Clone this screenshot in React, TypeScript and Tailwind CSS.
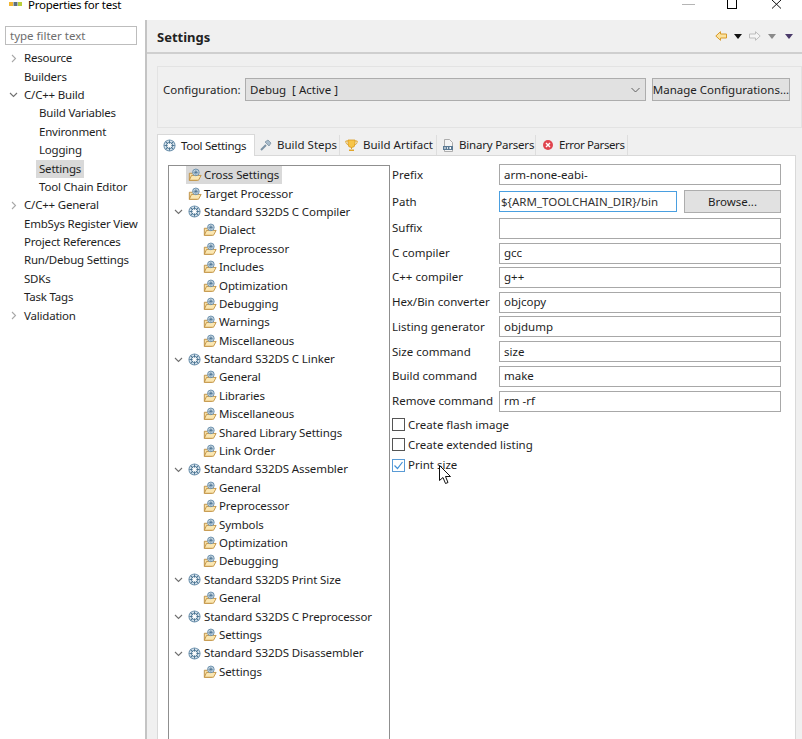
import React from "react";

const font = { fontFamily: '"Noto Sans", "Open Sans", sans-serif' };

function Gear({ className = "" }: { className?: string }) {
  return (
    <svg width="13" height="13" viewBox="0 0 14 14" className={"shrink-0 " + className}>
      <circle cx="7" cy="7" r="6" fill="#d5e2ec" stroke="#6f93ae" strokeWidth="1.100" />
      <circle cx="7" cy="7" r="3.400" fill="#fff" stroke="#4d7896" strokeWidth="1" />
      <path d="M7 1.500V5M7 9v3.500M1.500 7H5M9 7h3.500M3 3l2.500 2.500M8.500 8.500L11 11M11 3L8.500 5.500M5.500 8.500L3 11" stroke="#47708f" strokeWidth="1" />
    </svg>
  );
}

function FolderGear() {
  return (
    <svg width="14" height="14" viewBox="0 0 16 15" className="shrink-0">
      <path d="M1.500 5.500H5l1-1h4v9H1.500z" fill="#f6dfa6" stroke="#b98a3e" strokeWidth="1" />
      <path d="M1.500 13.500L4 8h11l-3 5.500z" fill="#fbe7b2" stroke="#c08f3d" strokeWidth="1" />
      <circle cx="9" cy="4.500" r="3.800" fill="#dce8f0" stroke="#5f87a6" strokeWidth="1" />
      <path d="M9 1.500v6M6 4.500h6M7 2.500l4 4M11 2.500l-4 4" stroke="#47708f" strokeWidth="0.800" />
    </svg>
  );
}

function Chevron({ open }: { open: boolean }) {
  return (
    <svg width="9" height="9" viewBox="0 0 9 9" className="shrink-0">
      {open ? (
        <path d="M1 3l3.500 3.500L8 3" fill="none" stroke="#707070" strokeWidth="1.100" />
      ) : (
        <path d="M3 1l3.500 3.500L3 8" fill="none" stroke="#a8a8a8" strokeWidth="1.100" />
      )}
    </svg>
  );
}

const nav: [string, number, boolean?, boolean?][] = [
  ["Resource", 0, false, true],
  ["Builders", 0],
  ["C/C++ Build", 0, true, true],
  ["Build Variables", 1],
  ["Environment", 1],
  ["Logging", 1],
  ["Settings", 1],
  ["Tool Chain Editor", 1],
  ["C/C++ General", 0, false, true],
  ["EmbSys Register View", 0],
  ["Project References", 0],
  ["Run/Debug Settings", 0],
  ["SDKs", 0],
  ["Task Tags", 0],
  ["Validation", 0, false, true],
];

const tree: [string, number][] = [
  ["Cross Settings", 0],
  ["Target Processor", 0],
  ["Standard S32DS C Compiler", 2],
  ["Dialect", 1],
  ["Preprocessor", 1],
  ["Includes", 1],
  ["Optimization", 1],
  ["Debugging", 1],
  ["Warnings", 1],
  ["Miscellaneous", 1],
  ["Standard S32DS C Linker", 2],
  ["General", 1],
  ["Libraries", 1],
  ["Miscellaneous", 1],
  ["Shared Library Settings", 1],
  ["Link Order", 1],
  ["Standard S32DS Assembler", 2],
  ["General", 1],
  ["Preprocessor", 1],
  ["Symbols", 1],
  ["Optimization", 1],
  ["Debugging", 1],
  ["Standard S32DS Print Size", 2],
  ["General", 1],
  ["Standard S32DS C Preprocessor", 2],
  ["Settings", 1],
  ["Standard S32DS Disassembler", 2],
  ["Settings", 1],
];

const fields: [string, string, string][] = [
  ["Prefix", "arm-none-eabi-", "h-[27px]"],
  ["Path", "${ARM_TOOLCHAIN_DIR}/bin", "h-[27px]"],
  ["Suffix", "", "h-[26px]"],
  ["C compiler", "gcc", "h-[24px]"],
  ["C++ compiler", "g++", "h-[24.500px]"],
  ["Hex/Bin converter", "objcopy", "h-[25px]"],
  ["Listing generator", "objdump", "h-[24.750px]"],
  ["Size command", "size", "h-[24.750px]"],
  ["Build command", "make", "h-[24.750px]"],
  ["Remove command", "rm -rf", "h-[24.750px]"],
];

function Tab({ label, icon, w, active, track = "" }: { label: string; icon: React.ReactNode; w: string; active?: boolean; track?: string }) {
  return (
    <div
      className={
        (active
          ? "flex items-center gap-[5px] h-[22px] pl-[5px] bg-white border border-b-0 border-[#d9d9d9] relative top-px "
          : "flex items-center gap-[5px] h-[20px] pl-[5px] bg-[#f0f0f0] border-r border-[#dedede] ") + w
      }
    >
      {icon}
      <span className={"whitespace-nowrap " + track}>{label}</span>
    </div>
  );
}

function Check({ checked, label }: { checked?: boolean; label: string }) {
  return (
    <div className="flex items-center h-[20.300px] gap-[2px]">
      <div className={"w-[13px] h-[13px] border bg-white flex items-center justify-center " + (checked ? "border-[#5a9bd5]" : "border-[#555]")}>
        {checked && (
          <svg width="11" height="11" viewBox="0 0 11 11">
            <path d="M1.500 5.500l3 3 5-6.500" fill="none" stroke="#3f8fd6" strokeWidth="1.200" />
          </svg>
        )}
      </div>
      <span className="ml-[1px]">{label}</span>
    </div>
  );
}

export default function App() {
  return (
    <div style={font} className="w-[802px] h-[739px] overflow-hidden bg-white text-[11.500px] leading-[18px] text-[#1e1e1e] flex flex-col relative">
      {/* title bar */}
      <div className="h-[20px] shrink-0 flex items-start bg-white">
        <svg width="13" height="6" viewBox="0 0 13 6" className="ml-[9px] mt-[1px] shrink-0">
          <path d="M0 1h4v4H0z" fill="#f2b632" />
          <path d="M4.500 1h4v4h-4z" fill="#5d6f7d" />
          <path d="M9 1h4v4H9z" fill="#b9cf3a" />
        </svg>
        <span className="ml-[6px] -mt-[4px] text-[11.500px] tracking-[-0.250px] text-black whitespace-nowrap">Properties for test</span>
        <div className="ml-auto flex items-start">
          <div className="w-[13px] h-px bg-[#b5b5b5] mt-[4px] mr-[32px]" />
          <div className="w-[10px] h-[9px] border border-t-0 border-black mr-[35px]" />
          <svg width="10" height="9" viewBox="0 0 10 9" className="mr-[20px]">
            <path d="M0 0l9 8.500M9 0L0 8.500" stroke="#111" strokeWidth="1" />
          </svg>
        </div>
      </div>

      <div className="flex-1 flex min-h-0">
        {/* left nav */}
        <div className="w-[145px] shrink-0 bg-white pl-[5px] pt-[6px]">
          <div className="w-[132px] h-[19px] border border-[#bdbdbd] px-[4px] flex items-center text-[#6d6d6d]">type filter text</div>
          <div className="mt-[4px] pr-[1px] tracking-[-0.200px]">
            {nav.map(([label, level, open, hasChild]) => (
              <div key={label} className="h-[18.400px] flex items-center whitespace-nowrap">
                <div className="w-[19px] shrink-0 flex items-center pl-[4px]">{hasChild && <Chevron open={!!open} />}</div>
                {level === 1 ? (
                  <span className={"ml-[12px] px-[3px] " + (label === "Settings" ? "bg-[#d9d9d9]" : "")}>{label}</span>
                ) : (
                  <span>{label}</span>
                )}
              </div>
            ))}
          </div>
        </div>

        {/* right */}
        <div className="flex-1 min-w-0 bg-[#f0f0f0] border-l-2 border-[#c4c4c4] flex flex-col">
          <div className="h-[34px] shrink-0 border-b-2 border-[#cfcfcf] flex items-center pl-[10px] pr-[9px]">
            <span className="font-bold text-[13px] text-[#222] relative top-px">Settings</span>
            <div className="ml-auto flex items-center gap-[4px]">
              <svg width="12" height="10" viewBox="0 0 12 10">
                <path d="M5.500.700L.800 5l4.700 4.300V7h6V3h-6z" fill="#fbe3a0" stroke="#d89a2b" strokeWidth="1" />
              </svg>
              <svg width="8" height="5" viewBox="0 0 8 5" className="ml-[3px]"><path d="M0 0h8L4 5z" fill="#111" /></svg>
              <svg width="12" height="10" viewBox="0 0 12 10" className="ml-[3px]">
                <path d="M6.500.700L11.200 5 6.500 9.300V7h-6V3h6z" fill="#f5f5f5" stroke="#bdbdbd" strokeWidth="1" />
              </svg>
              <svg width="8" height="5" viewBox="0 0 8 5" className="ml-[3px]"><path d="M0 0h8L4 5z" fill="#8a8a8a" /></svg>
              <svg width="8" height="5" viewBox="0 0 8 5" className="ml-[5px]"><path d="M0 0h8L4 5z" fill="#4a3a6a" /></svg>
            </div>
          </div>

          <div className="flex-1 min-h-0 pl-[10px] pr-[6px] pt-[12px] flex flex-col">
            {/* configuration */}
            <div className="h-[62px] shrink-0 border border-[#e3e3e3] -mr-[6px] flex items-start pl-[5px] pr-[11px] pt-[11px]">
              <span className="w-[82px] shrink-0 h-[23px] flex items-center">Configuration:</span>
              <div className="flex-1 h-[23px] border border-[#adadad] bg-[#e1e1e1] flex items-center pl-[4px] pr-[5px] whitespace-pre">
                <span>Debug  [ Active ]</span>
                <svg width="9" height="6" viewBox="0 0 9 6" className="ml-auto">
                  <path d="M.500 1l4 4 4-4" fill="none" stroke="#606060" strokeWidth="1" />
                </svg>
              </div>
              <div className="ml-[6px] w-[138px] h-[23px] border border-[#adadad] bg-[#e1e1e1] flex items-center justify-center whitespace-nowrap">Manage Configurations...</div>
            </div>

            {/* tabs */}
            <div className="mt-[6px] h-[22px] shrink-0 flex items-end border-b border-[#d9d9d9] relative">
              <Tab active w="w-[98px]" track="tracking-[-0.300px]" label="Tool Settings" icon={<Gear />} />
              <Tab
                w="w-[85px]"
                label="Build Steps"
                icon={
                  <svg width="12" height="12" viewBox="0 0 12 12" className="shrink-0">
                    <path d="M1 11l5-5" stroke="#7d93a5" strokeWidth="2" />
                    <path d="M5 3l3-2 3 3-2 3z" fill="#a9bccb" stroke="#7d93a5" strokeWidth="0.800" />
                  </svg>
                }
              />
              <Tab
                w="w-[97px]"
                label="Build Artifact"
                icon={
                  <svg width="13" height="13" viewBox="0 0 13 13" className="shrink-0">
                    <path d="M3 1h7v4a3.500 3.500 0 01-7 0z" fill="#f7c548" stroke="#d99a1e" strokeWidth="0.800" />
                    <path d="M3 2H.800c0 2.500 1 3.500 2.700 3.800M10 2h2.200c0 2.500-1 3.500-2.700 3.800" fill="none" stroke="#e0a52a" strokeWidth="1" />
                    <path d="M6 8h1v2H6zM4 10.500h5V12H4z" fill="#e0a52a" />
                  </svg>
                }
              />
              <Tab
                w="w-[99px]"
                track="tracking-[-0.200px]"
                label="Binary Parsers"
                icon={
                  <svg width="12" height="13" viewBox="0 0 12 13" className="shrink-0">
                    <path d="M2.500.500h5l3 3v9h-8z" fill="#f5f5f5" stroke="#9a9a9a" strokeWidth="0.800" />
                    <path d="M1 7h10v4H1z" fill="#5b7a94" />
                    <path d="M2.500 8h1v2h-1zM5 8h.800v2H5zM7.500 8h1.500v2H7.500z" fill="#fff" />
                  </svg>
                }
              />
              <Tab
                w="w-[92px]"
                track="tracking-[-0.400px]"
                label="Error Parsers"
                icon={
                  <svg width="12" height="12" viewBox="0 0 12 12" className="shrink-0 ml-[1px]">
                    <circle cx="6" cy="6" r="5" fill="#e0454f" />
                    <path d="M4 4l4 4M8 4l-4 4" stroke="#fff" strokeWidth="1.400" />
                  </svg>
                }
              />
            </div>

            {/* panel */}
            <div className="flex-1 min-h-0 bg-white border-l border-r border-[#d9d9d9] pl-[10px] pt-[9px] flex">
              <div className="w-[222px] shrink-0 border border-[#8f8f8f] border-b-0 pl-[5px] overflow-hidden tracking-[-0.100px]">
                {tree.map(([label, kind], i) => (
                  <div key={i} className="h-[18.400px] flex items-center whitespace-nowrap">
                    {kind === 2 ? (
                      <>
                        <Chevron open />
                        <Gear className="ml-[5px]" />
                        <span className="ml-[3px]">{label}</span>
                      </>
                    ) : (
                      <div className={"flex items-center gap-[2px] pl-[2px] pr-[3px] " + (kind === 1 ? "ml-[27px]" : "ml-[12px]") + (i === 0 ? " bg-[#d9d9d9]" : "")}>
                        <FolderGear />
                        <span>{label}</span>
                      </div>
                    )}
                  </div>
                ))}
              </div>

              <div className="ml-[2px] -mt-[4px] w-[389px] flex flex-col">
                {fields.map(([label, value, h]) => (
                  <div key={label} className={"flex items-center shrink-0 " + h}>
                    <span className="w-[107px] shrink-0 whitespace-nowrap">{label}</span>
                    {label === "Path" ? (
                      <>
                        <div className="w-[178px] h-[21px] border border-[#4a9fe0] bg-white flex items-center px-[1px] text-[#333] whitespace-nowrap">
                          {value}
                        </div>
                        <div className="ml-[7px] w-[97px] h-[23px] border border-[#adadad] bg-[#e1e1e1] flex items-center justify-center">Browse...</div>
                      </>
                    ) : (
                      <div className="w-[282px] h-[21px] border border-[#a8a8a8] bg-white flex items-center px-[4px] whitespace-nowrap">{value}</div>
                    )}
                  </div>
                ))}
                <div className="mt-[1px]">
                  <Check label="Create flash image" />
                  <Check label="Create extended listing" />
                  <Check checked label="Print size" />
                </div>
              </div>
            </div>
          </div>
        </div>
      </div>

      {/* mouse cursor */}
      <svg width="13" height="20" viewBox="0 0 13 20" className="absolute left-[439px] top-[465px]">
        <path d="M.500.500v15l3.500-3 2.500 6 2.500-1-2.500-6h5z" fill="#fff" stroke="#111" strokeWidth="1" />
      </svg>
    </div>
  );
}
